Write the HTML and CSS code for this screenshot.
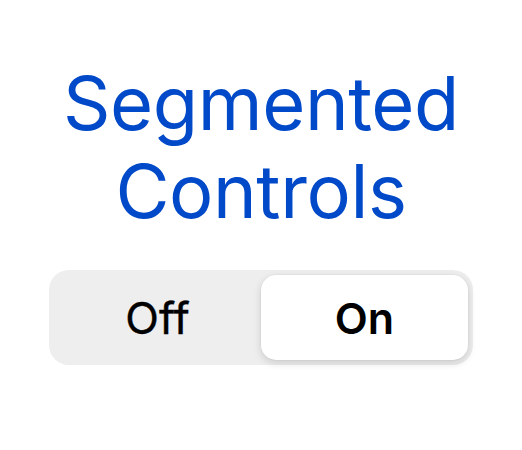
FILE: index.html
```html
<!DOCTYPE html>
<html>
<head>
<meta charset="utf-8">
<link rel="stylesheet" href="styles.css">
</head>
<body>
<div class="page">
  <h1 class="title">Segmented<br>Controls</h1>
  <div class="segmented">
    <div class="segment">Off</div>
    <div class="segment selected">On</div>
  </div>
</div>
</body>
</html>
```
FILE: styles.css
```css
html, body {
  margin: 0;
  padding: 0;
  background: #ffffff;
}
.page {
  width: 522px;
  height: 450px;
  display: flex;
  flex-direction: column;
  align-items: center;
  font-family: Inter, "Liberation Sans", sans-serif;
}
.title {
  margin: 59px 0 0 0;
  font-size: 74px;
  font-weight: 400;
  line-height: 88px;
  color: #0049c8;
  text-align: center;
  letter-spacing: -0.4px;
}
.segmented {
  margin-top: 35px;
  width: 424px;
  height: 95px;
  box-sizing: border-box;
  padding: 5px;
  border-radius: 20px;
  background: #eeeeef;
  display: grid;
  grid-template-columns: 1fr 1fr;
}
.segment {
  display: flex;
  align-items: center;
  justify-content: center;
  font-size: 44px;
  font-weight: 400;
  color: #000;
  -webkit-text-stroke: 0.4px #000;
}
.segment.selected {
  background: #fff;
  border-radius: 15px;
  font-size: 43px;
  font-weight: 600;
  -webkit-text-stroke: 0;
  box-shadow: 0 3px 8px rgba(0,0,0,0.14), 0 0 0 0.5px rgba(0,0,0,0.05);
}
```
